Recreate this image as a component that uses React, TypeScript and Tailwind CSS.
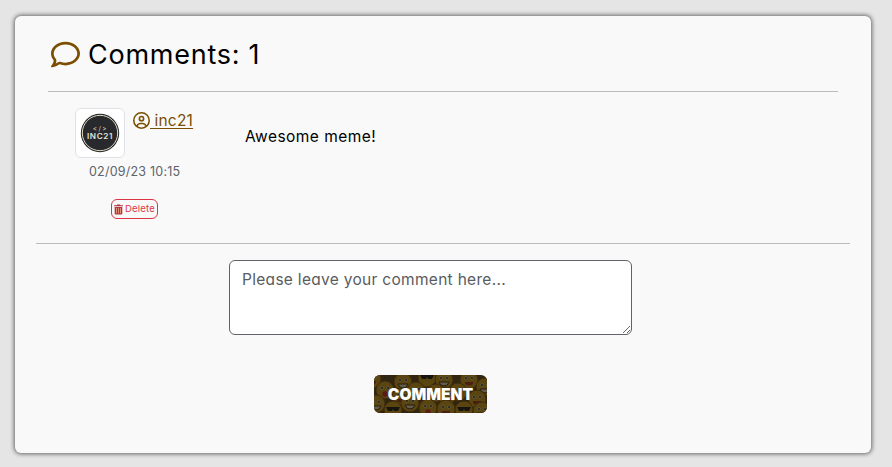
import { FaRegCircleUser, FaRegComment } from "react-icons/fa6";

const INTER = "font-['Inter','Noto_Sans',sans-serif] [font-feature-settings:'cv11']";

function TrashIcon() {
  return (
    <svg viewBox="0 0 9 11" className="h-[11px] w-[9px] shrink-0">
      <path d="M0 1.200h2.600L3.200.4h2.600l.6.8H9v1.100H0z" fill="#b5303c" />
      <path d="M.7 3h7.600v6.600a1 1 0 0 1-1 1H1.700a1 1 0 0 1-1-1z" fill="#b5333c" />
      <path d="M2.500 4v5.400M4.500 4v5.400M6.500 4v5.400" stroke="#e59a80" strokeWidth="0.9" />
    </svg>
  );
}

function Avatar() {
  return (
    <div className="flex h-[50px] w-[50px] items-center justify-center rounded-md border border-[#dee2e6] bg-white">
      <svg viewBox="0 0 40 40" className="h-10 w-10">
        <circle cx="20" cy="20" r="19.200" fill="#25262a" />
        <circle cx="20" cy="20" r="17.700" fill="#28292c" stroke="#e2dbc3" strokeWidth="1" />
        <text x="20.400" y="17.500" textAnchor="middle" fontFamily="Inter" fontSize="6.500" letterSpacing="1.500" fill="#d6ceb4">{"</>"}</text>
        <text x="20" y="26" textAnchor="middle" fontFamily="Inter" fontWeight="600" fontSize="7" letterSpacing="0.500" textLength="26" lengthAdjust="spacingAndGlyphs" fill="#e6e2d6">INC21</text>
      </svg>
    </div>
  );
}

const faces = [
  [-2, 4, 0], [11, 15, 3], [29, 7, 1], [53, 3, 2], [70, 5, 1], [95, 5, 0], [111, 12, 1],
  [42, 16, 0], [62, 18, 1], [84, 17, 3], [103, 24, 0], [27, 22, 0], [73, 21, 0],
  [2, 29, 1], [19, 35, 2], [36, 28, 1], [54, 33, 3], [72, 34, 0], [90, 35, 2], [108, 36, 1],
];

function EmojiPattern() {
  return (
    <svg viewBox="0 0 113 38" className="absolute inset-0 h-full w-full">
      {faces.map(([x, y, kind]) => (
        <g key={`${x}-${y}`} transform={`translate(${x} ${y})`}>
          <circle r="9" fill="#5a4511" stroke="#3f2b0d" />
          {kind === 2 ? (
            <path d="M-7-3h14l-2 4h-4L0-1l-1 2h-4z" fill="#15140f" />
          ) : (
            <>
              <circle cx="-3" cy="-2" r="1.700" fill="#5f5b4a" />
              <circle cx="3" cy="-2" r="1.700" fill="#5f5b4a" />
              <circle cx="-3" cy="-2" r="0.9" fill="#1e190f" />
              <circle cx="3" cy="-2" r="0.9" fill="#1e190f" />
            </>
          )}
          {kind === 1 && <path d="M-5 2H5Q4 6 0 6T-5 2" fill="#625c4b" stroke="#2a1c0e" />}
          {kind === 0 && <path d="M-4 2h8v2q-4 3-8 0z" fill="#4b1e12" />}
          {kind === 3 && <circle cy="4" r="2.700" fill="#5b1a14" />}
        </g>
      ))}
    </svg>
  );
}

export default function App() {
  return (
    <div className={`flex h-[467px] w-[892px] bg-[#e5e5e5] pt-4 pl-[15px] text-black ${INTER}`}>
      <main className="flex h-[437px] w-[856px] flex-col rounded-md bg-[#f9f9f9] shadow-[0_0_4px_1px_#666]">
        <header className="mx-[33px] flex h-[76px] w-[790px] items-center border-b border-[#bbb] pt-px pl-[3px]">
          <FaRegComment className="h-[29px] w-[29px] text-[#7a4f01]" />
          <h1 className="mt-px ml-2 text-[27px] leading-8 tracking-[0.75px] whitespace-nowrap">Comments: 1</h1>
        </header>
        <article className="mx-[21px] flex h-[152px] w-[814px] border-b border-[#bbb]">
          <div className="w-[209px] pt-4 pl-[39px]">
            <div className="flex">
              <Avatar />
              <a href="#" className="ml-2 flex h-6 items-center text-[#7a4f01]">
                <FaRegCircleUser className="h-[17px] w-[17px]" />
                <span className="pt-px text-[15.500px] tracking-[0.2px] whitespace-pre underline underline-offset-2"> inc21</span>
              </a>
            </div>
            <time className="mt-1 ml-[14px] block text-[12.500px] leading-5 tracking-[0.22px] whitespace-nowrap text-[#5c636a]">02/09/23 10:15</time>
            <button className="mt-[17px] ml-9 flex h-5 w-[47px] items-center gap-[2px] rounded-md border border-[#dc3545] pl-[2px] text-[9.500px] text-[#dc3545]">
              <TrashIcon />
              <span className="pt-px tracking-[0.2px]">Delete</span>
            </button>
          </div>
          <p className="pt-[33px] text-[15.500px] leading-6 tracking-[0.45px] whitespace-nowrap">Awesome meme!</p>
        </article>
        <form className="flex flex-col pt-4">
          <textarea
            placeholder="Please leave your comment here..."
            className="ml-[214px] block h-[75px] w-[403px] resize rounded-md border border-[#606367] bg-white px-3 pt-[7px] pb-[5px] text-[15.500px] leading-6 tracking-[0.3px] placeholder:text-[#595c5f]"
          />
          <button type="button" className="relative mt-10 ml-[359px] h-[38px] w-[113px] overflow-hidden rounded-md bg-[#302510]">
            <EmojiPattern />
            <span className="relative text-[15.500px] font-black text-white">COMMENT</span>
          </button>
        </form>
      </main>
    </div>
  );
}
